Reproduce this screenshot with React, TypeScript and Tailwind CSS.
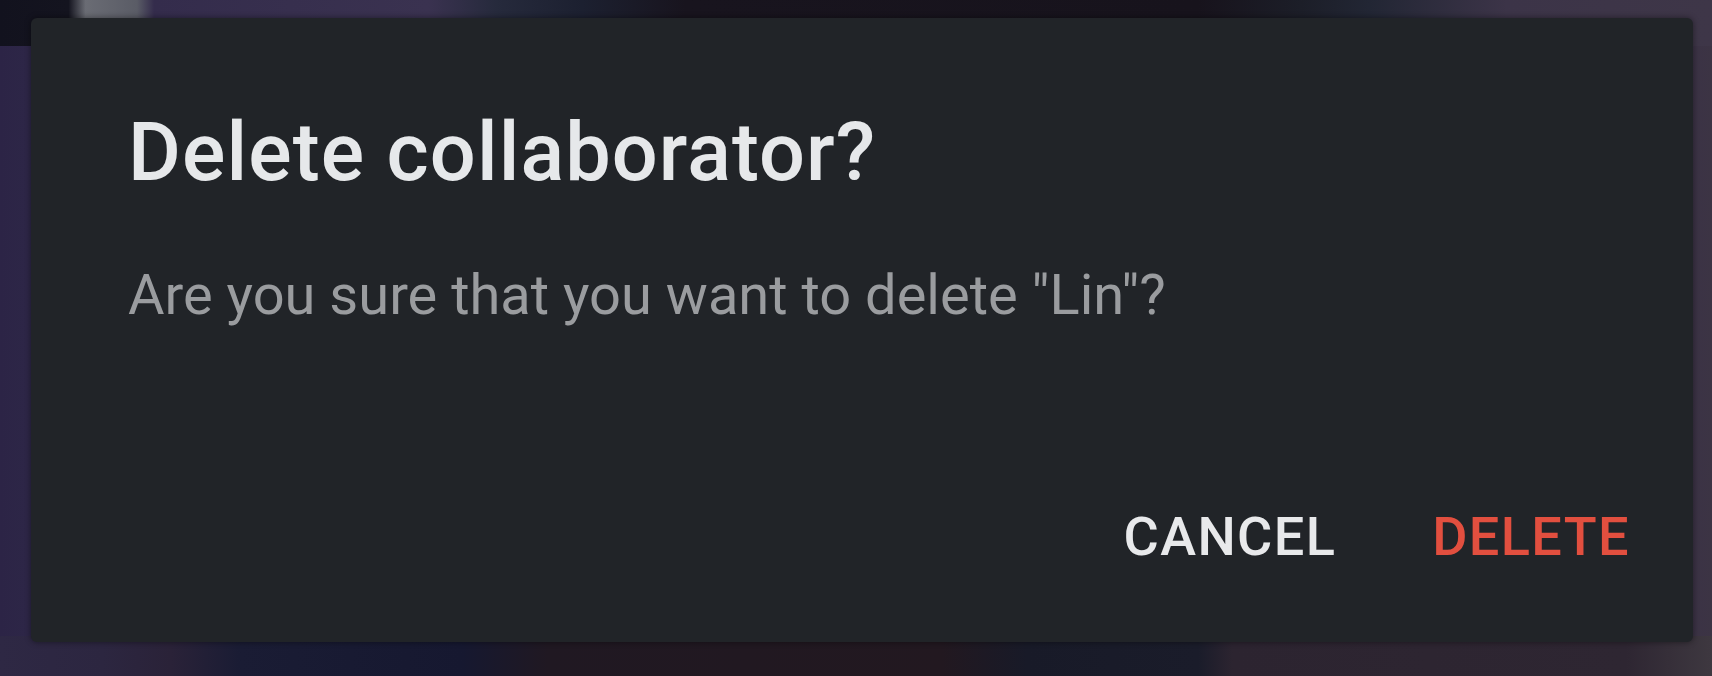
import React from "react";

export default function App() {
  return (
    <div
      className="w-[1712px] h-[676px] overflow-hidden pl-[31px] pt-[18px] font-['Roboto',sans-serif] [background:linear-gradient(90deg,#12121e_0%,#14141f_4%,#6a6c74_5%,#5a5c66_8%,#342c4c_9%,#3a3250_25%,#262a3c_29%,#1c2030_34%,#18141e_40%,#17131c_70%,#1c1e28_76%,#222634_80%,#3c3448_88%,#3e3648_100%)_top/100%_46px_no-repeat,linear-gradient(90deg,#2e2844_0%,#2c2640_6%,#2a2238_10%,#1a1c34_14%,#161830_27%,#201822_32%,#221820_55%,#181a28_60%,#1a1c2a_70%,#2c2430_72%,#2e2632_95%,#3e3840_100%)_bottom/100%_40px_no-repeat,linear-gradient(90deg,#2c2446_0%,#2e2848_3%,#30283c_50%,#3a3048_97%,#3c3444_100%)]"
    >
      <div className="w-[1662px] h-[624px] rounded-[6px] bg-[#212428] shadow-[0_0_6px_rgba(0,0,0,0.45)] pl-[97px] pr-[63px] pt-[94px] flex flex-col">
        <h1 className="text-[81px] leading-none font-medium tracking-[1.1px] text-[#e6e8ea]">Delete collaborator?</h1>
        <p className="mt-[74px] text-[56px] leading-none text-[#9a9c9f]">
          Are you sure that you want to delete "Lin"?
        </p>
        <div className="mt-[187px] flex justify-end gap-[96px] text-[54px] leading-none font-medium">
          <button className="text-[#e8e9eb] tracking-[1.4px]">CANCEL</button>
          <button className="text-[#e24f3f] tracking-[1.4px]">DELETE</button>
        </div>
      </div>
    </div>
  );
}
